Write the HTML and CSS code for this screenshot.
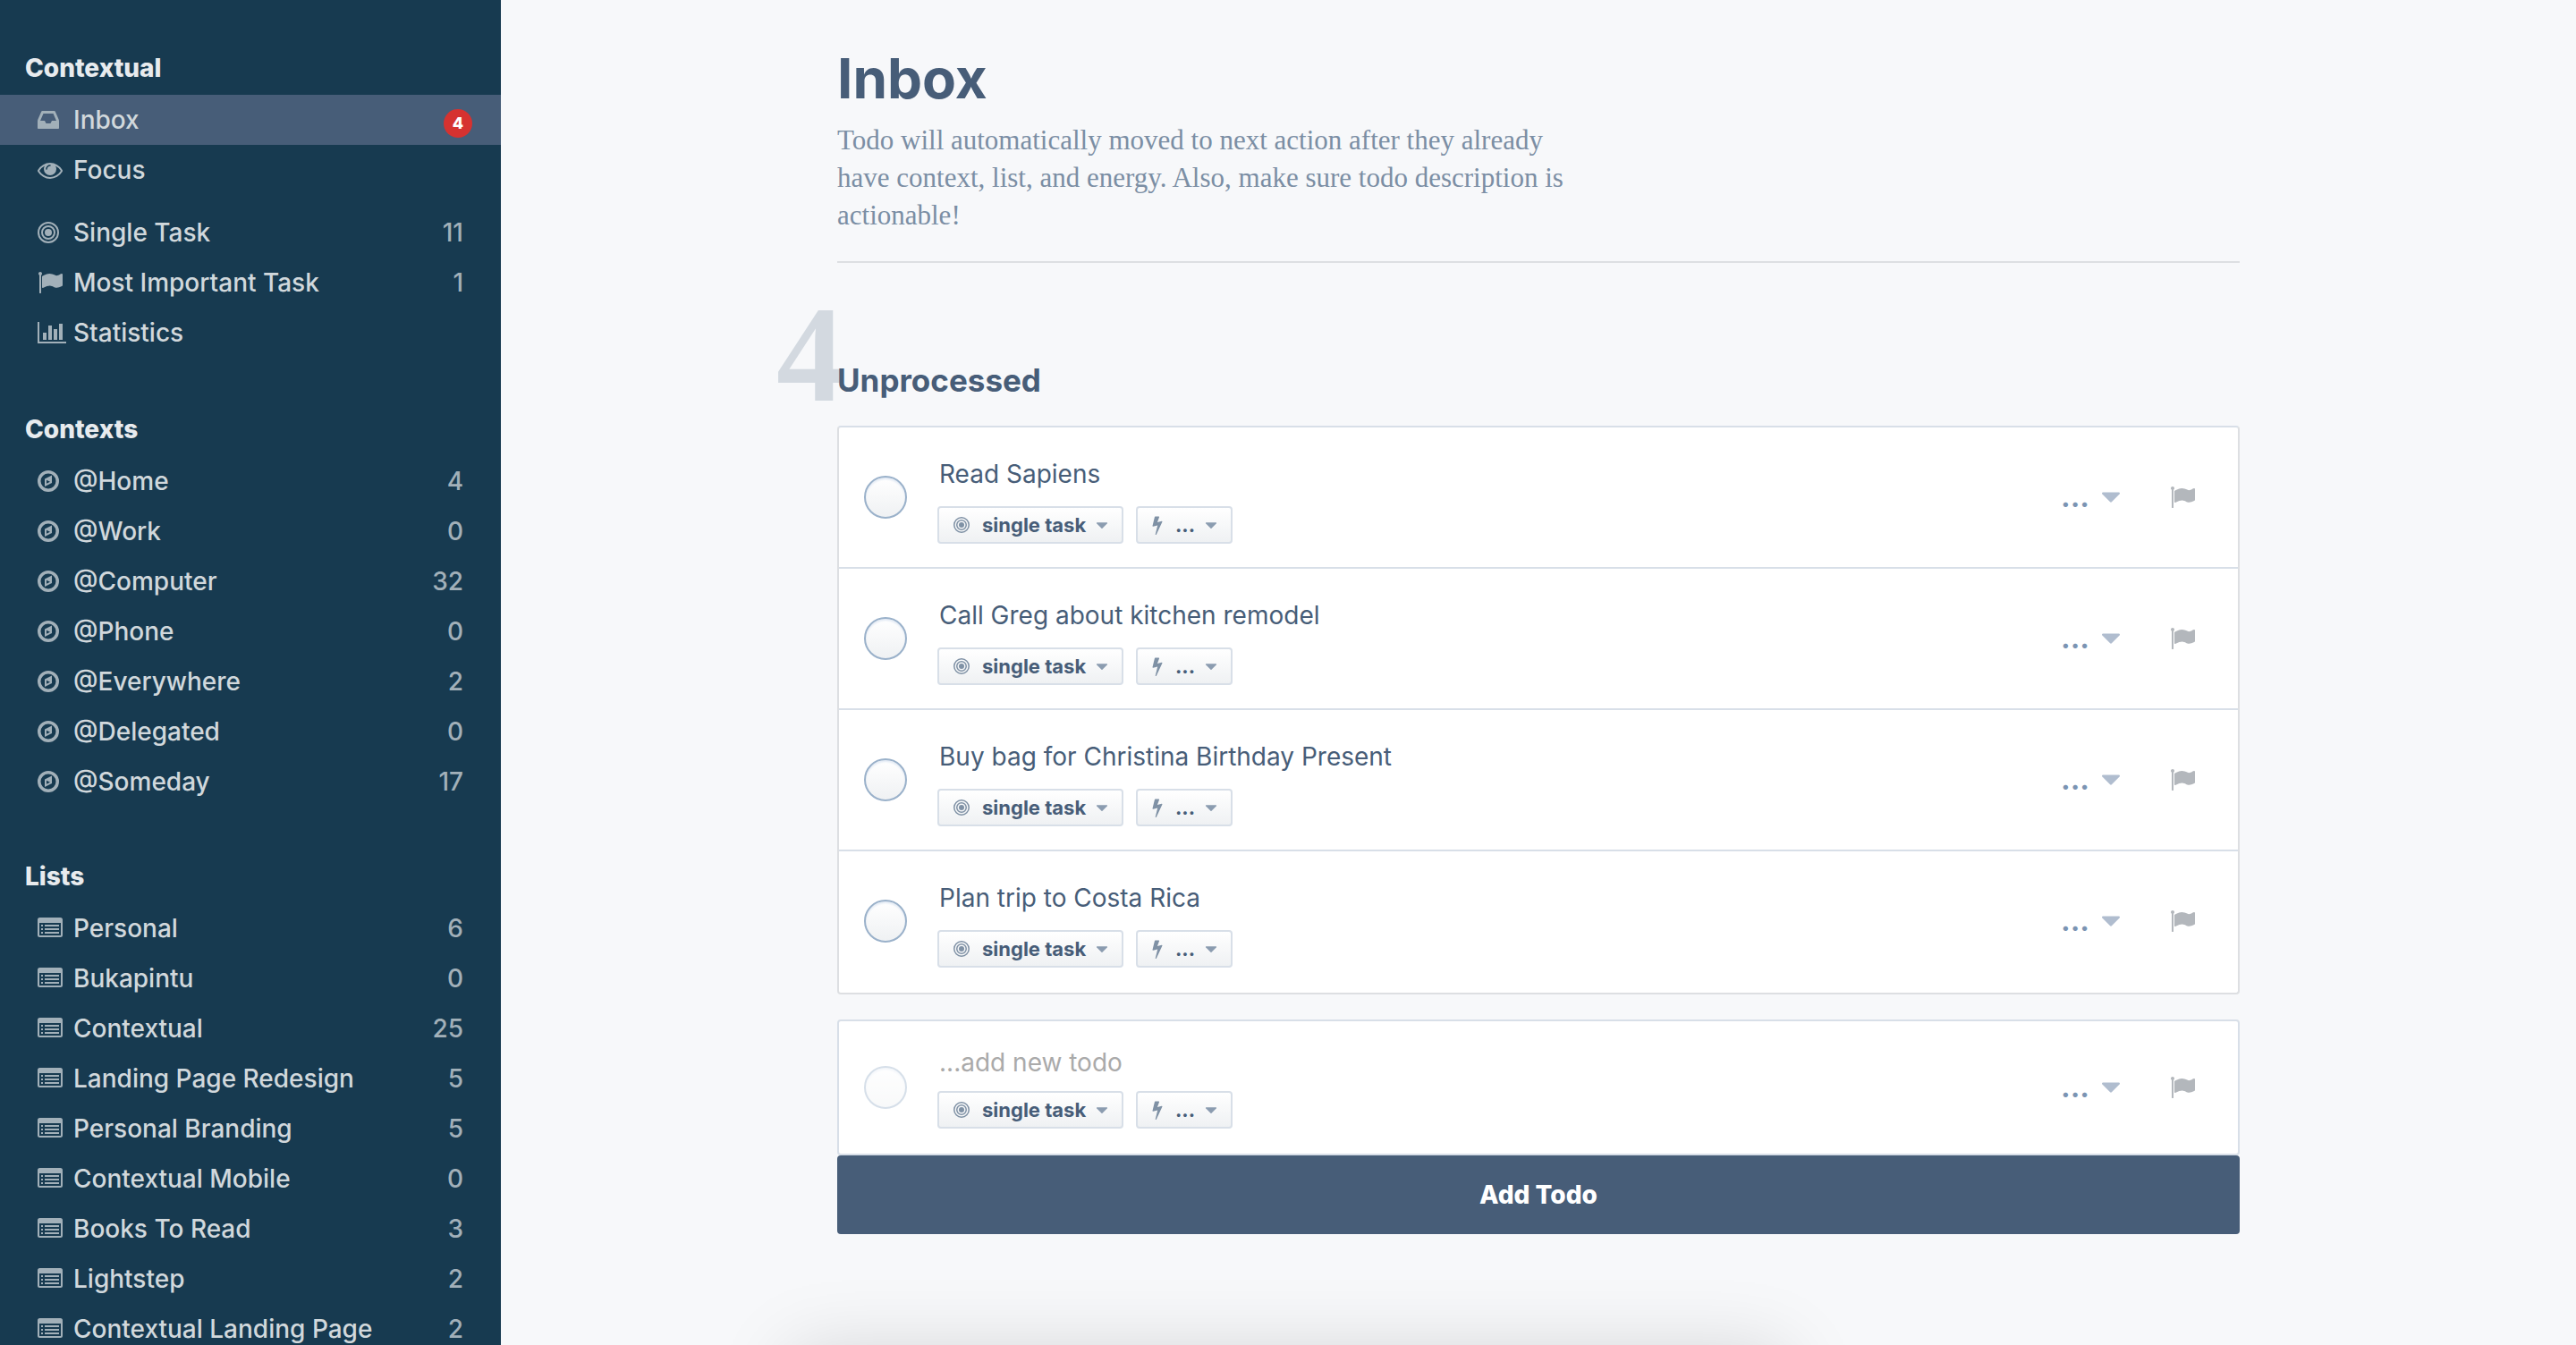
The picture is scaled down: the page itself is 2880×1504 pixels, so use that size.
FILE: index.html
```html
<!DOCTYPE html>
<html lang="en">
<head>
<meta charset="utf-8">
<title>Inbox – Contextual</title>
<meta name="viewport" content="width=device-width, initial-scale=1">
<link rel="stylesheet" href="styles.css">
</head>
<body>
<svg class="sprite" aria-hidden="true">
  <symbol id="i-inbox" viewBox="128 0 1792 1792"><path d="M1151 960h316q-1-3-2.500-8t-2.500-8l-212-496h-708l-212 496q-1 2-2.500 8t-2.500 8h316l95 192h320zm513 30v482q0 26-19 45t-45 19h-1408q-26 0-45-19t-19-45v-482q0-62 25-123l238-552q10-25 36.500-42t52.500-17h832q26 0 52.500 17t36.500 42l238 552q25 61 25 123z"/></symbol>
  <symbol id="i-eye" viewBox="0 0 1792 1792"><path d="M1664 960q-152-236-381-353 61 104 61 225 0 185-131.500 316.500t-316.500 131.500-316.500-131.500-131.500-316.500q0-121 61-225-229 117-381 353 133 205 333.500 326.500t434.500 121.500 434.500-121.500 333.500-326.500zm-720-384q0-20-14-34t-34-14q-125 0-214.500 89.500t-89.500 214.500q0 20 14 34t34 14 34-14 14-34q0-86 61-147t147-61q20 0 34-14t14-34zm848 384q0 34-20 69-140 230-376.500 368.500t-499.500 138.500-499.500-139-376.500-368q-20-35-20-69t20-69q140-229 376.500-368t499.500-139 499.500 139 376.500 368q20 35 20 69z"/></symbol>
  <symbol id="i-target" viewBox="0 0 1536 1536"><circle cx="768" cy="768" r="704" fill="none" stroke="currentColor" stroke-width="128"/><circle cx="768" cy="768" r="448" fill="none" stroke="currentColor" stroke-width="128"/><circle cx="768" cy="768" r="256"/></symbol>
  <symbol id="i-flag" viewBox="0 0 1792 1792"><path d="M320 256q0 72-64 110v1266q0 13-9.500 22.500t-22.500 9.500h-64q-13 0-22.500-9.500t-9.500-22.500v-1266q-64-38-64-110 0-53 37.500-90.500t90.500-37.500 90.500 37.500 37.500 90.500zm1472 64v763q0 25-12.500 38.500t-39.500 27.500q-215 116-369 116-61 0-123.500-22t-108.500-48-115.500-48-142.500-22q-192 0-464 146-17 9-33 9-26 0-45-19t-19-45v-742q0-32 31-55 21-14 79-43 236-120 421-120 107 0 200 29t219 88q38 19 88 19 54 0 117.500-21t110-47 88-47 54.500-21q26 0 45 19t19 45z"/></symbol>
  <symbol id="i-chart" viewBox="0 0 2048 1792"><path d="M640 896v512h-256v-512h256zm384-512v1024h-256v-1024h256zm1024 1152v128h-2048v-1536h128v1408h1920zm-640-896v768h-256v-768h256zm384-384v1152h-256v-1152h256z"/></symbol>
  <symbol id="i-compass" viewBox="128 0 1792 1792"><circle cx="896" cy="896" r="656" fill="none" stroke="currentColor" stroke-width="224"/><path fill-rule="evenodd" d="M768 1069l256-128-256-128zM1152 480v542l-512 256v-542z"/></symbol>
  <symbol id="i-list" viewBox="0 0 28 28"><path fill-rule="evenodd" d="M2.500 2h23a2.500 2.500 0 0 1 2.500 2.500v17a2.500 2.500 0 0 1-2.500 2.500h-23a2.500 2.500 0 0 1-2.500-2.500v-17a2.500 2.500 0 0 1 2.500-2.500zM2 8v13.500q0 .5.500.5h23q.5 0 .5-.5V8zM4 10h2v2H4zM8 10h16v2H8zM4 14h2v2H4zM8 14h16v2H8zM4 18h2v2H4zM8 18h16v2H8z"/></symbol>
  <symbol id="i-bolt" viewBox="448 0 896 1792"><path d="M1333 566q18 20 7 44l-540 1157q-13 25-42 25-4 0-14-2-17-5-25.500-19t-4.500-30l197-808-406 101q-4 1-12 1-18 0-31-11-18-15-13-39l201-825q4-14 16-23t28-9h328q19 0 32 12.500t13 29.500q0 8-5 18l-171 463 396-98q8-2 12-2 19 0 34 15z"/></symbol>
  <symbol id="i-caret" viewBox="384 640 1024 576"><path d="M1408 704q0 26-19 45l-448 448q-19 19-45 19t-45-19l-448-448q-19-19-19-45t19-45 45-19h896q26 0 45 19t19 45z"/></symbol>
</svg>
<div class="app">
  <nav class="sidebar" aria-label="Main">
    <section class="group group-main">
      <h2 class="group-title">Contextual</h2>
      <ul class="menu">
        <li><a class="item active" href="#"><svg class="icon"><use href="#i-inbox"/></svg><span class="name">Inbox</span><span class="badge">4</span></a></li>
        <li><a class="item" href="#"><svg class="icon"><use href="#i-eye"/></svg><span class="name">Focus</span></a></li>
      </ul>
      <ul class="menu menu-spaced">
        <li><a class="item" href="#"><svg class="icon icon-target"><use href="#i-target"/></svg><span class="name">Single Task</span><span class="count">11</span></a></li>
        <li><a class="item" href="#"><svg class="icon"><use href="#i-flag"/></svg><span class="name">Most Important Task</span><span class="count">1</span></a></li>
        <li><a class="item" href="#"><svg class="icon icon-chart"><use href="#i-chart"/></svg><span class="name">Statistics</span></a></li>
      </ul>
    </section>
    <section class="group">
      <h2 class="group-title">Contexts</h2>
      <ul class="menu">
        <li><a class="item" href="#"><svg class="icon"><use href="#i-compass"/></svg><span class="name">@Home</span><span class="count">4</span></a></li>
        <li><a class="item" href="#"><svg class="icon"><use href="#i-compass"/></svg><span class="name">@Work</span><span class="count">0</span></a></li>
        <li><a class="item" href="#"><svg class="icon"><use href="#i-compass"/></svg><span class="name">@Computer</span><span class="count">32</span></a></li>
        <li><a class="item" href="#"><svg class="icon"><use href="#i-compass"/></svg><span class="name">@Phone</span><span class="count">0</span></a></li>
        <li><a class="item" href="#"><svg class="icon"><use href="#i-compass"/></svg><span class="name">@Everywhere</span><span class="count">2</span></a></li>
        <li><a class="item" href="#"><svg class="icon"><use href="#i-compass"/></svg><span class="name">@Delegated</span><span class="count">0</span></a></li>
        <li><a class="item" href="#"><svg class="icon"><use href="#i-compass"/></svg><span class="name">@Someday</span><span class="count">17</span></a></li>
      </ul>
    </section>
    <section class="group">
      <h2 class="group-title">Lists</h2>
      <ul class="menu">
        <li><a class="item" href="#"><svg class="icon"><use href="#i-list"/></svg><span class="name">Personal</span><span class="count">6</span></a></li>
        <li><a class="item" href="#"><svg class="icon"><use href="#i-list"/></svg><span class="name">Bukapintu</span><span class="count">0</span></a></li>
        <li><a class="item" href="#"><svg class="icon"><use href="#i-list"/></svg><span class="name">Contextual</span><span class="count">25</span></a></li>
        <li><a class="item" href="#"><svg class="icon"><use href="#i-list"/></svg><span class="name">Landing Page Redesign</span><span class="count">5</span></a></li>
        <li><a class="item" href="#"><svg class="icon"><use href="#i-list"/></svg><span class="name">Personal Branding</span><span class="count">5</span></a></li>
        <li><a class="item" href="#"><svg class="icon"><use href="#i-list"/></svg><span class="name">Contextual Mobile</span><span class="count">0</span></a></li>
        <li><a class="item" href="#"><svg class="icon"><use href="#i-list"/></svg><span class="name">Books To Read</span><span class="count">3</span></a></li>
        <li><a class="item" href="#"><svg class="icon"><use href="#i-list"/></svg><span class="name">Lightstep</span><span class="count">2</span></a></li>
        <li><a class="item" href="#"><svg class="icon"><use href="#i-list"/></svg><span class="name">Contextual Landing Page</span><span class="count">2</span></a></li>
      </ul>
    </section>
  </nav>
  <main class="main">
    <div class="content">
      <header class="page-head">
        <h1 class="title">Inbox</h1>
        <p class="lead">Todo will automatically moved to next action after they already have context, list, and energy. Also, make sure todo description is actionable!</p>
      </header>
      <section class="todos">
        <div class="section-head">
          <span class="big-count">4</span>
          <h2 class="section-title">Unprocessed</h2>
        </div>
        <ul class="card">
          <li class="row">
            <input class="check" type="checkbox" aria-label="Read Sapiens">
            <div class="body">
              <p class="todo">Read Sapiens</p>
              <div class="tags">
                <button class="tag" type="button"><svg class="tag-icon"><use href="#i-target"/></svg>single task<svg class="tag-caret"><use href="#i-caret"/></svg></button>
                <button class="tag tag-energy" type="button"><svg class="tag-bolt"><use href="#i-bolt"/></svg>...<svg class="tag-caret"><use href="#i-caret"/></svg></button>
              </div>
            </div>
            <button class="more" type="button"><span class="dots">...</span><svg class="more-caret"><use href="#i-caret"/></svg></button>
            <button class="flag" type="button" aria-label="Most important"><svg class="flag-icon"><use href="#i-flag"/></svg></button>
          </li>
          <li class="row">
            <input class="check" type="checkbox" aria-label="Call Greg about kitchen remodel">
            <div class="body">
              <p class="todo">Call Greg about kitchen remodel</p>
              <div class="tags">
                <button class="tag" type="button"><svg class="tag-icon"><use href="#i-target"/></svg>single task<svg class="tag-caret"><use href="#i-caret"/></svg></button>
                <button class="tag tag-energy" type="button"><svg class="tag-bolt"><use href="#i-bolt"/></svg>...<svg class="tag-caret"><use href="#i-caret"/></svg></button>
              </div>
            </div>
            <button class="more" type="button"><span class="dots">...</span><svg class="more-caret"><use href="#i-caret"/></svg></button>
            <button class="flag" type="button" aria-label="Most important"><svg class="flag-icon"><use href="#i-flag"/></svg></button>
          </li>
          <li class="row">
            <input class="check" type="checkbox" aria-label="Buy bag for Christina Birthday Present">
            <div class="body">
              <p class="todo">Buy bag for Christina Birthday Present</p>
              <div class="tags">
                <button class="tag" type="button"><svg class="tag-icon"><use href="#i-target"/></svg>single task<svg class="tag-caret"><use href="#i-caret"/></svg></button>
                <button class="tag tag-energy" type="button"><svg class="tag-bolt"><use href="#i-bolt"/></svg>...<svg class="tag-caret"><use href="#i-caret"/></svg></button>
              </div>
            </div>
            <button class="more" type="button"><span class="dots">...</span><svg class="more-caret"><use href="#i-caret"/></svg></button>
            <button class="flag" type="button" aria-label="Most important"><svg class="flag-icon"><use href="#i-flag"/></svg></button>
          </li>
          <li class="row">
            <input class="check" type="checkbox" aria-label="Plan trip to Costa Rica">
            <div class="body">
              <p class="todo">Plan trip to Costa Rica</p>
              <div class="tags">
                <button class="tag" type="button"><svg class="tag-icon"><use href="#i-target"/></svg>single task<svg class="tag-caret"><use href="#i-caret"/></svg></button>
                <button class="tag tag-energy" type="button"><svg class="tag-bolt"><use href="#i-bolt"/></svg>...<svg class="tag-caret"><use href="#i-caret"/></svg></button>
              </div>
            </div>
            <button class="more" type="button"><span class="dots">...</span><svg class="more-caret"><use href="#i-caret"/></svg></button>
            <button class="flag" type="button" aria-label="Most important"><svg class="flag-icon"><use href="#i-flag"/></svg></button>
          </li>
        </ul>
        <form class="new-form">
          <div class="card card-new">
            <div class="row row-new">
              <input class="check check-faint" type="checkbox" aria-label="Done" disabled>
              <div class="body">
                <input class="todo todo-input" type="text" placeholder="...add new todo" aria-label="New todo">
                <div class="tags">
                  <button class="tag" type="button"><svg class="tag-icon"><use href="#i-target"/></svg>single task<svg class="tag-caret"><use href="#i-caret"/></svg></button>
                  <button class="tag tag-energy" type="button"><svg class="tag-bolt"><use href="#i-bolt"/></svg>...<svg class="tag-caret"><use href="#i-caret"/></svg></button>
                </div>
              </div>
              <button class="more" type="button"><span class="dots">...</span><svg class="more-caret"><use href="#i-caret"/></svg></button>
              <button class="flag" type="button" aria-label="Most important"><svg class="flag-icon"><use href="#i-flag"/></svg></button>
            </div>
          </div>
          <button class="add" type="submit">Add Todo</button>
        </form>
      </section>
    </div>
  </main>
</div>
<div class="drawer"></div>
</body>
</html>
```
FILE: styles.css
```css
* { box-sizing: border-box; }

body {
  margin: 0;
  background: #f7f8fa;
  color: #475d78;
  font: 28px/36px Inter, "Liberation Sans", sans-serif;
}

h1, h2, p, ul { margin: 0; padding: 0; }
ul { list-style: none; }
button { font: inherit; cursor: pointer; }
svg { display: block; fill: currentColor; flex: none; }
.sprite { position: absolute; width: 0; height: 0; }

.app { display: flex; height: 100vh; overflow: hidden; }

/* Sidebar */
.sidebar {
  flex: none;
  width: 560px;
  padding-top: 46px;
  display: flex;
  flex-direction: column;
  gap: 48px;
  overflow-y: auto;
  scrollbar-width: none;
  background: #173a50;
}
.group-main { padding-bottom: 2px; }
.group-title {
  padding-left: 28px;
  color: #e8ebee;
  font-size: 28px;
  line-height: 60px;
  font-weight: 800;
}
.menu-spaced { margin-top: 14px; }
.item {
  display: flex;
  align-items: center;
  height: 56px;
  padding: 0 42px;
  color: #d1d8dc;
  font-weight: 500;
  text-decoration: none;
}
.item.active { background: #475d78; padding-right: 32px; }
.icon { width: 28px; height: 28px; margin-right: 12px; color: #a2b0b9; }
.icon-target { width: 24px; height: 24px; margin-right: 16px; }
.icon-chart { width: 32px; margin-right: 8px; }
.name { flex: 1; white-space: nowrap; }
.count { color: #a2b0b9; }
.badge {
  width: 32px;
  height: 32px;
  margin-top: 8px;
  border-radius: 50%;
  background: #d63230;
  color: #fff;
  font-size: 18px;
  line-height: 32px;
  font-weight: 800;
  text-align: center;
}

/* Page */
.main { flex: 1; overflow-y: auto; scrollbar-width: none; }
.content { max-width: 1568px; margin: 0 auto; padding-bottom: 80px; }
.page-head {
  padding: 48px 0 30px;
  border-bottom: 2px solid #dddfe2;
}
.title { font-size: 62px; line-height: 80px; font-weight: 700; }
.lead {
  max-width: 826px;
  margin-top: 8px;
  color: #7b8ea4;
  font: 31px/42px "Liberation Serif", serif;
}
.section-head {
  position: relative;
  padding: 110px 0 30px;
}
.big-count {
  position: absolute;
  top: 28px;
  left: -68px;
  color: #d3d9e0;
  font: 700 152px/150px "Liberation Serif", serif;
}
.section-title { position: relative; font-size: 35px; line-height: 42px; font-weight: 700; }

/* Todo rows */
.card {
  border: 2px solid #dddfe2;
  border-top-color: #d8dfe8;
  border-radius: 4px;
  background: #fff;
}
.row {
  display: flex;
  align-items: center;
  padding-left: 28px;
  height: 158px;
  border-bottom: 2px solid #d8dfe8;
}
.row:last-child { border-bottom-color: transparent; }
.check {
  appearance: none;
  flex: none;
  width: 48px;
  height: 48px;
  margin: 0 34px 0 0;
  border: 2px solid #9ab1ca;
  border-radius: 50%;
  background: linear-gradient(#fff, #eff1f3);
  box-shadow: inset 0 2px 2px #e4ebf5;
}
.check-faint { opacity: .4; }
.body { flex: 1; padding-top: 8px; }
.todo { padding-left: 2px; line-height: 36px; margin-bottom: 18px; }
.tags { display: flex; gap: 14px; }
.tag {
  display: flex;
  align-items: center;
  width: 208px;
  height: 42px;
  padding: 0 16px;
  border: 2px solid #d8dfe8;
  border-radius: 4px;
  background: linear-gradient(#fff, #eff1f3);
  color: #475d78;
  font-size: 22px;
  line-height: 36px;
  font-weight: 700;
}
.tag-energy { width: 108px; }
.tag-icon { width: 18px; height: 18px; margin-right: 14px; color: #7f91a5; }
.tag-bolt { width: 12px; height: 22px; margin-right: 14px; color: #7f91a5; }
.tag-caret { width: 12px; height: 7px; margin-left: auto; color: #8b9cb0; }
.more {
  display: flex;
  align-items: center;
  gap: 14px;
  padding: 0;
  border: 0;
  background: none;
  color: #7b94b3;
}
.dots { font-size: 32px; line-height: 48px; font-weight: 700; }
.more-caret { width: 20px; height: 12px; color: #b0bdcf; }
.flag { margin: 0 48px 0 56px; padding: 0; border: 0; background: none; color: #b3b7bc; }
.flag-icon { width: 28px; height: 28px; }

/* New todo */
.new-form { margin-top: 28px; }
.card-new { border-color: #d8dfe8; }
.row-new { height: 148px; border: 0; }
.row-new .body { padding-top: 0; }
.todo-input {
  display: block;
  width: 100%;
  height: 36px;
  margin-bottom: 14px;
  padding: 0 0 0 2px;
  border: 0;
  outline: 0;
  background: none;
  color: #475d78;
  font: inherit;
}
.todo-input::placeholder { color: #aaa; opacity: 1; }
.add {
  display: block;
  width: 100%;
  height: 88px;
  border: 0;
  border-radius: 4px;
  background: #475d78;
  color: #fff;
  font-weight: 800;
}

/* Drawer parked just below the window; only its shadow shows */
.drawer {
  position: fixed;
  top: 100%;
  left: 50%;
  width: 1110px;
  height: 400px;
  margin: 8px 0 0 -555px;
  box-shadow: 0 0 80px rgba(0, 0, 0, .15);
}
```
